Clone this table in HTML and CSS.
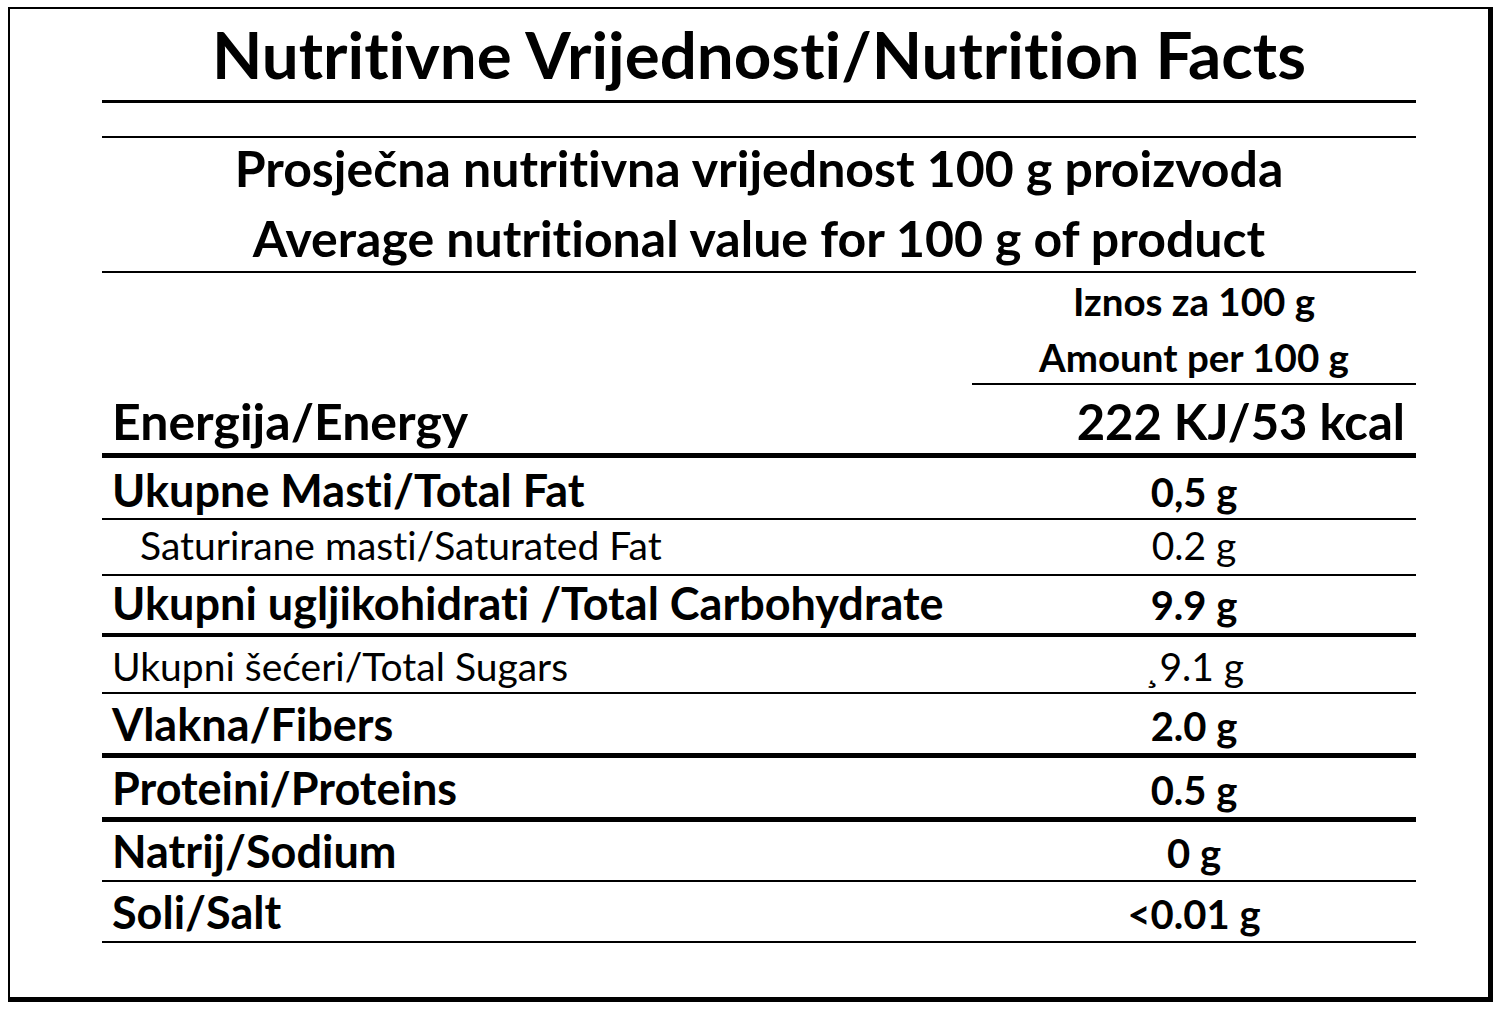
FILE: index.html
```html
<!DOCTYPE html>
<html lang="hr">
<head>
<meta charset="utf-8">
<title>Nutritivne Vrijednosti</title>
<link rel="stylesheet" href="styles.css">
</head>
<body>
<div class="label">
  <h1 class="title">Nutritivne Vrijednosti/Nutrition Facts</h1>
  <div class="spacer"></div>
  <div class="sub">
    <p>Prosječna nutritivna vrijednost 100 g proizvoda</p>
    <p>Average nutritional value for 100 g of product</p>
  </div>
  <div class="row head">
    <div class="name"></div>
    <div class="val"><p>Iznos za 100 g</p><p>Amount per 100 g</p></div>
  </div>
  <div class="row energy">
    <div class="name">Energija/Energy</div>
    <div class="val">222 KJ/53 kcal</div>
  </div>
  <div class="row bold fat">
    <div class="name">Ukupne Masti/Total Fat</div>
    <div class="val">0,5 g</div>
  </div>
  <div class="row light sat">
    <div class="name">Saturirane masti/Saturated Fat</div>
    <div class="val">0.2 g</div>
  </div>
  <div class="row bold carb">
    <div class="name">Ukupni ugljikohidrati /Total Carbohydrate</div>
    <div class="val">9.9 g</div>
  </div>
  <div class="row light sugar">
    <div class="name">Ukupni šećeri/Total Sugars</div>
    <div class="val">¸9.1 g</div>
  </div>
  <div class="row bold fiber">
    <div class="name">Vlakna/Fibers</div>
    <div class="val">2.0 g</div>
  </div>
  <div class="row bold prot">
    <div class="name">Proteini/Proteins</div>
    <div class="val">0.5 g</div>
  </div>
  <div class="row bold sod">
    <div class="name">Natrij/Sodium</div>
    <div class="val">0 g</div>
  </div>
  <div class="row bold salt">
    <div class="name">Soli/Salt</div>
    <div class="val">&lt;0.01 g</div>
  </div>
</div>
</body>
</html>
```
FILE: styles.css
```css
html, body {
  margin: 0;
  padding: 0;
  background: #fff;
}
body {
  font-family: Lato, "Liberation Sans", sans-serif;
  color: #000;
  font-variant-ligatures: none;
  font-feature-settings: "liga" 0, "clig" 0, "dlig" 0;
}
.label {
  margin: 7px 0 0 8px;
  width: 1485px;
  height: 995px;
  box-sizing: border-box;
  border-style: solid;
  border-color: #000;
  border-width: 2px 5px 5px 2px;
  padding: 0 72px 0 92px;
}
.title {
  margin: 0;
  height: 91px;
  line-height: 90px;
  font-size: 65.5px;
  font-weight: 700;
  text-align: center;
  border-bottom: 3px solid #000;
  white-space: nowrap;
}
.spacer {
  height: 33px;
  border-bottom: 2px solid #000;
}
.sub {
  display: flow-root;
  height: 133px;
  border-bottom: 2px solid #000;
  font-size: 50px;
  font-weight: 700;
  text-align: center;
}
.sub p {
  margin: 0;
  line-height: 70px;
  white-space: nowrap;
}
.sub p:first-child {
  margin-top: -5px;
}
.row {
  display: flex;
  align-items: baseline;
  white-space: nowrap;
  border-bottom: 2px solid #000;
}
.row .name {
  flex: 0 0 870px;
  box-sizing: border-box;
  padding-left: 10px;
}
.row .val {
  flex: 1 1 auto;
  text-align: center;
}
.bold .name {
  font-size: 45px;
  font-weight: 700;
}
.bold .val {
  font-size: 40px;
  font-weight: 700;
}
.light {
  font-size: 39px;
  font-weight: 400;
}
.head {
  height: 112px;
  align-items: flex-start;
  border-bottom: 0;
  font-size: 38.5px;
  font-weight: 700;
}
.head .val {
  height: 110px;
  border-bottom: 2px solid #000;
}
.head .val p {
  margin: 0;
  line-height: 56px;
}
.energy {
  height: 68px;
  line-height: 73px;
  font-size: 50px;
  font-weight: 700;
  border-bottom-width: 5px;
}
.energy .val {
  font-size: 49px;
  text-align: right;
  padding-right: 11px;
}
.fat { height: 60px; line-height: 65px; }
.sat { height: 54px; line-height: 50px; }
.sat .name { padding-left: 38px; }
.carb { height: 57px; line-height: 55px; border-bottom-width: 4px; }
.sugar { height: 55px; line-height: 59px; }
.fiber { height: 59px; line-height: 60px; border-bottom-width: 5px; }
.prot { height: 59px; line-height: 60px; border-bottom-width: 5px; }
.sod { height: 58px; line-height: 58px; }
.salt { height: 59px; line-height: 60px; }
```
